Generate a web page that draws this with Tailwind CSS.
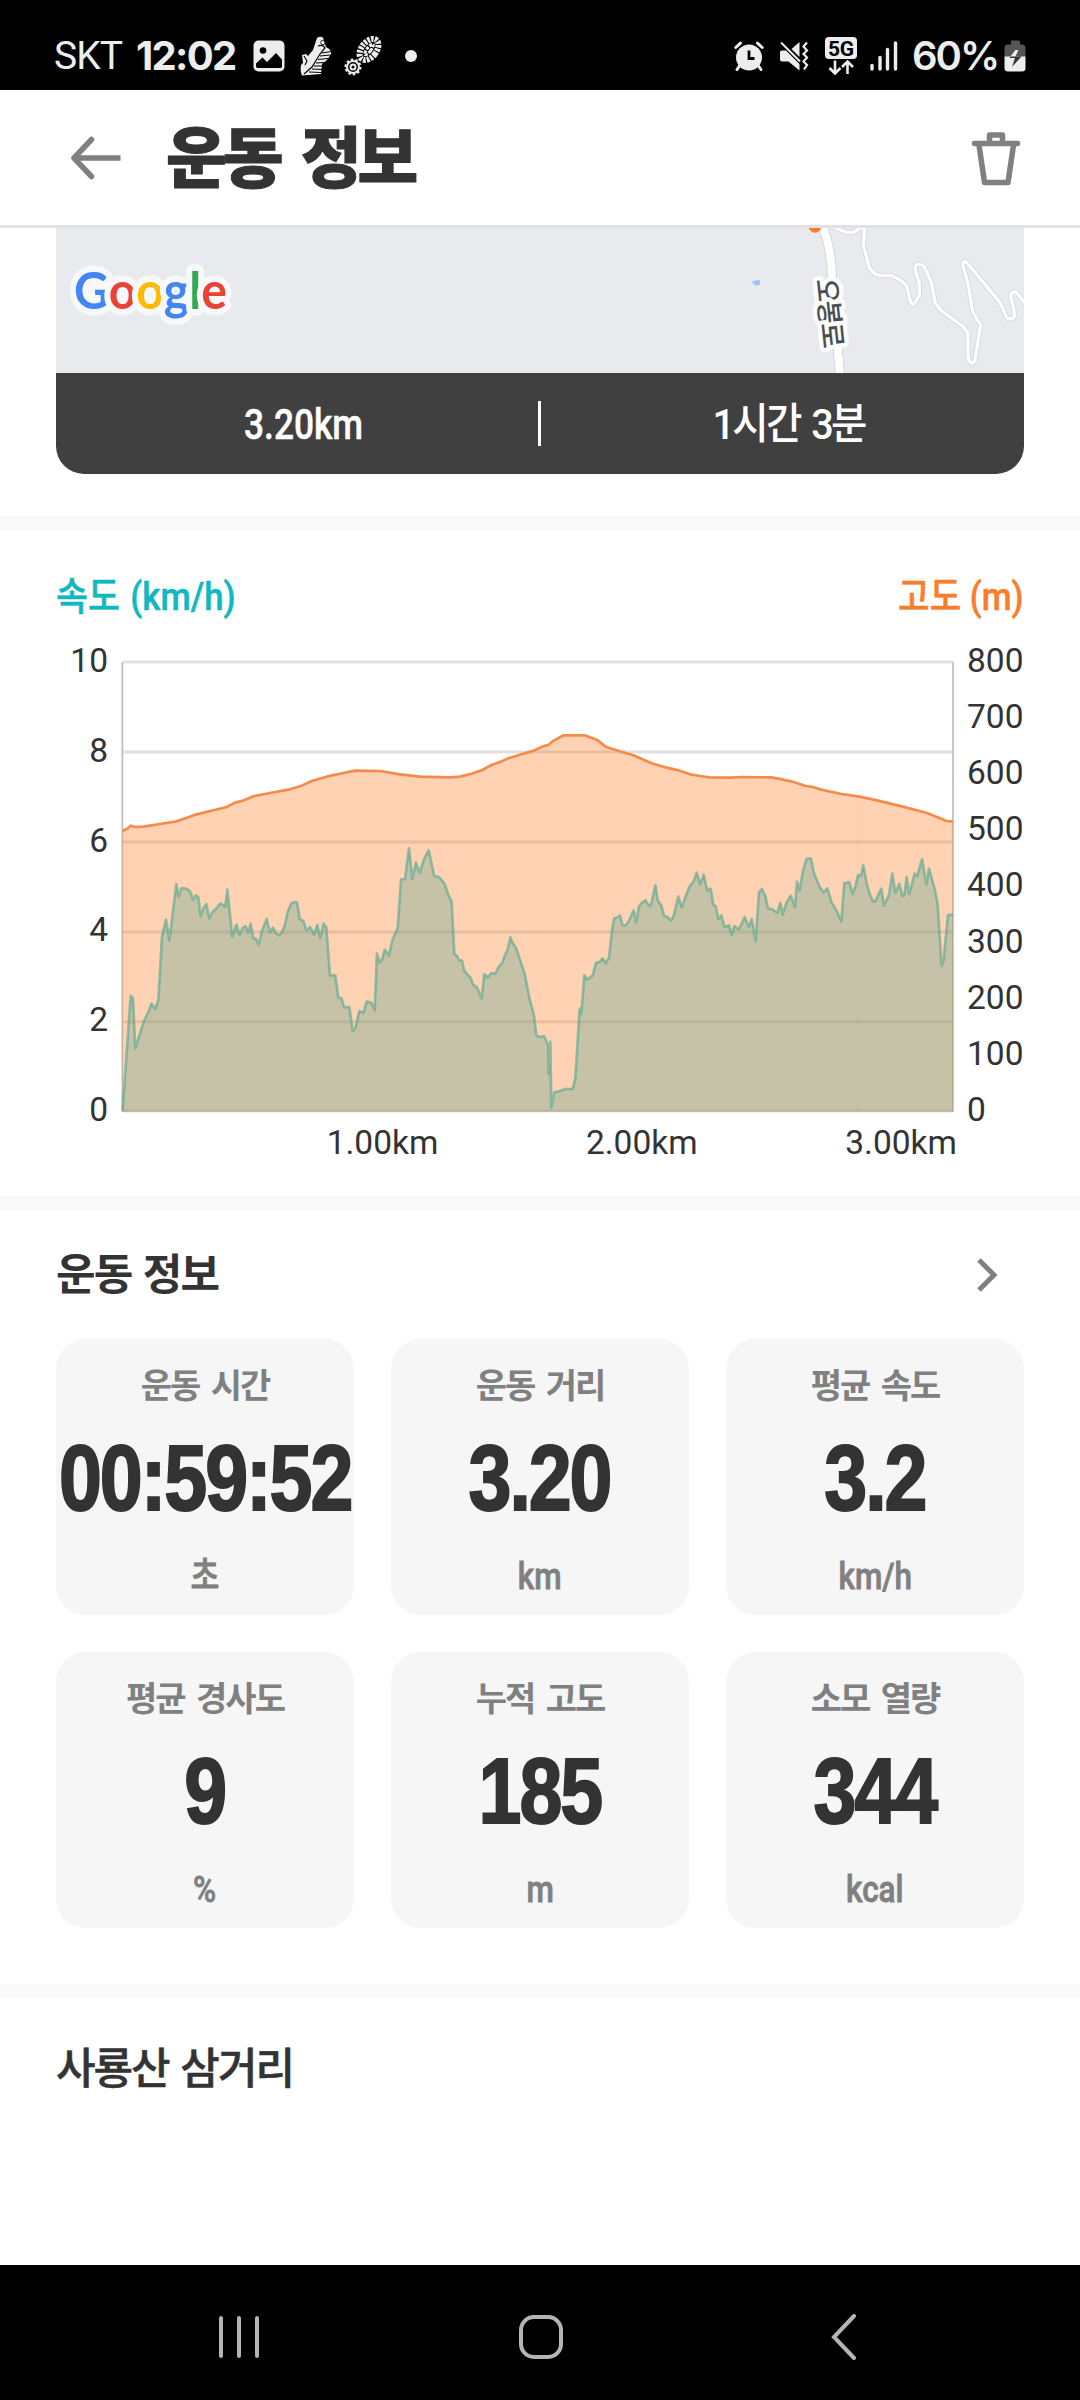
<!DOCTYPE html>
<html lang="ko">
<head>
  <meta charset="UTF-8">
  <title>운동 정보</title>
  <script src="https://cdn.jsdelivr.net/npm/@tailwindcss/browser@4"></script>
  <meta name="viewport" content="width=device-width, initial-scale=1.0">
</head>

<body class="bg-white">
  <div class="w-[1080px] h-[2400px] flex flex-col overflow-hidden bg-white text-[#333333] font-['Roboto','Noto_Sans_CJK_KR',sans-serif]">

    <!-- Status bar -->
    <div class="h-[90px] shrink-0 bg-black text-[#ededed] flex items-center justify-between pt-[22px] pl-[54px] pr-[54px]">
      <div class="flex items-center">
        <span class="w-[82px] text-[39px] leading-none tracking-[-1px]">SKT</span>
        <span class="w-[117px] text-[40px] leading-none font-bold font-['Inter',sans-serif] tracking-[-1.700px]">12:02</span>
        <svg class="w-[32px] h-[32px]" viewBox="0 0 32 32">
          <rect x="0.5" y="0.5" width="31" height="31" rx="5" fill="#ededed"/>
          <circle cx="10" cy="10.500" r="3.300" fill="#000"/>
          <path d="M3 23.500L9.500 17.500L14 22L23 13L29 19.500V26.500Q29 28 27 28H5Q3 28 3 26.500Z" fill="#000"/>
        </svg>
        <svg class="w-[32px] h-[40px] ml-[15px]" viewBox="0 0 32 40">
          <path d="M17 2Q20 0 23 1.500L26 11Q32 14 31 18L27 24L22 28L21 38L2 39.500Q0 35 1 29L3 27L2 19L6 18L8 20L13 14Z" fill="#ededed"/>
          <path d="M18 10Q23 8 25 12L20 18L12 31L4 38" fill="none" stroke="#000" stroke-width="1.200"/>
          <path d="M22 17L31 15.500M20 20L30 19M18 23.500L28 22.500M16 27L25 26.500M14 30L23 30M12 33L22 33.500M9 36L21 36.500M4 20L7 25L5 29" fill="none" stroke="#000" stroke-width="1.100"/>
          <circle cx="23" cy="6.500" r="2.300" fill="none" stroke="#000" stroke-width="0.800"/>
        </svg>
        <svg class="w-[38px] h-[40px] ml-[12px]" viewBox="0 0 38 40">
          <ellipse cx="25" cy="13.500" rx="7.500" ry="12" transform="rotate(38 25 13.500)" fill="none" stroke="#ededed" stroke-width="6" stroke-dasharray="2.600 1.100"/>
          <ellipse cx="25" cy="13.500" rx="2" ry="6.500" transform="rotate(38 25 13.500)" fill="none" stroke="#ededed" stroke-width="3" stroke-dasharray="3 1.200"/>
          <circle cx="9" cy="31" r="6" fill="none" stroke="#ededed" stroke-width="2"/>
          <circle cx="9" cy="31" r="7.500" fill="none" stroke="#ededed" stroke-width="2" stroke-dasharray="2.500 2.200"/>
          <circle cx="9" cy="31" r="2.500" fill="none" stroke="#ededed" stroke-width="2"/>
        </svg>
        <span class="w-[12px] h-[12px] rounded-full bg-[#ededed] ml-[23px]"></span>
      </div>

      <div class="flex items-center">
        <svg class="w-[30px] h-[30px]" viewBox="0 0 30 30">
          <circle cx="15" cy="16.500" r="13" fill="#ededed"/>
          <path d="M1.800 6.500L6.500 2.200M28.200 6.500L23.500 2.200M5.500 25L3 28.500M24.500 25L27 28.500" stroke="#ededed" stroke-width="3" stroke-linecap="round"/>
          <path d="M15 9.500V17.500H20.500" fill="none" stroke="#000" stroke-width="2.800"/>
        </svg>
        <svg class="w-[30px] h-[30px] ml-[15px]" viewBox="0 0 30 30">
          <path d="M1 11Q1 9.500 3 9.500H7L20.500 23V29.500L9.500 20.500H3Q1 20.500 1 18.500Z" fill="#ededed"/>
          <path d="M12.500 8L20.500 1V16Z" fill="#ededed"/>
          <path d="M2 1.500L21 20.500" stroke="#ededed" stroke-width="2"/>
          <path d="M28 1.500L24.500 5.500L28 9.500L24.500 13L28 16.500L24.500 20.500L28 24L25 28.500" fill="none" stroke="#ededed" stroke-width="2.200"/>
        </svg>
        <svg class="w-[34px] h-[38px] ml-[15px]" viewBox="0 0 34 38">
          <rect x="1" y="0" width="32" height="22" rx="4" fill="#ededed"/>
          <text x="17" y="18.500" text-anchor="middle" font-size="21" font-weight="700" textLength="26" fill="#000">5G</text>
          <path d="M11 23.500V36M5.500 31L11 36.500L16.500 31M23.500 37V24.500M18 30L23.500 24.500L29 30" fill="none" stroke="#ededed" stroke-width="2.600"/>
        </svg>
        <svg class="w-[28px] h-[30px] ml-[12px]" viewBox="0 0 28 30">
          <path d="M2 24.500V28M10 16.500V28M17.500 8.500V28M25.500 2V28" stroke="#ededed" stroke-width="3.400" stroke-linecap="round"/>
        </svg>
        <span class="w-[92px] ml-[14px] text-[40px] leading-none font-semibold font-['Inter',sans-serif] tracking-[-2px] whitespace-nowrap">60%</span>
        <svg class="w-[22px] h-[32px]" viewBox="0 0 22 32">
          <path d="M7 1.500Q7 0.500 8 0.500H15Q16 0.500 16 1.500V4.500H18Q21.500 4.500 21.500 8V17H0.500V8Q0.500 4.500 4 4.500H7Z" fill="#555"/>
          <path d="M0.500 16.500H21.500V28Q21.500 31.500 18 31.500H4Q0.500 31.500 0.500 28Z" fill="#ededed"/>
          <path d="M11.500 10L5.500 18H11L8 27L17.500 16.500H11.500L14.500 10Z" fill="#333"/>
          <path d="M11.500 10L6.300 16.500H11.500L14.500 10Z" fill="#ededed"/>
        </svg>
      </div>
    </div>

    <!-- Header -->
    <div class="h-[138px] shrink-0 border-b-[3px] border-[#e2e2e2] flex items-center pl-[70px] pr-[58px]">
      <svg class="w-[52px] h-[44px]" viewBox="0 0 52 44" fill="none" stroke="#808080" stroke-width="5.500" stroke-linecap="round" stroke-linejoin="round">
        <path d="M21.500 3.500L4 22L21.500 40.500"/>
        <path d="M4 22H50.500" stroke-linecap="butt"/>
      </svg>
      <h1 class="ml-[44px] pt-[5px] text-[66px] leading-none font-black tracking-[-4px] [word-spacing:9px] [-webkit-text-stroke:1px] grow">운동 정보</h1>
      <svg class="w-[52px] h-[56px]" viewBox="0 0 52 56" fill="none" stroke="#808080" stroke-width="5.500" stroke-linecap="round" stroke-linejoin="round">
        <path d="M4.500 13.500H47.500M19.500 13V5H32.500V13M9 15L14.500 52.500H38L43.500 15"/>
      </svg>
    </div>

    <!-- Map -->
    <div class="shrink-0 px-14">
      <svg class="block w-[968px] h-[145px] bg-[#e8eaee]" viewBox="0 0 968 145">
        <text x="18" y="80.500" font-size="52" font-family="Lato, sans-serif" font-weight="700" textLength="153" lengthAdjust="spacingAndGlyphs" stroke="#f6f8fa" stroke-width="13" stroke-linejoin="round" paint-order="stroke"><tspan fill="#4285f4">G</tspan><tspan fill="#ea4335">o</tspan><tspan fill="#fbbc05">o</tspan><tspan fill="#4285f4">g</tspan><tspan fill="#34a853">l</tspan><tspan fill="#ea4335">e</tspan></text>
        <g transform="translate(684 -3) scale(0.3333)" fill="none" stroke-linejoin="round">
          <path d="M36 169L48 166H60V178L52 182L40 178Z" fill="#a3c2f7"/>
          <g id="roads">
            <path d="M245 0C268 50 275 100 276 160L300 450" stroke="#d3d6da" stroke-width="30"/>
            <path d="M280 5L318 22H340L358 10L374 5L370 60L388 128L405 147L425 152H455L480 164L500 182L508 215C512 242 522 242 528 228L538 210V175L527 140C522 115 535 112 553 125L575 175L586 235L605 258L670 305L684 325V395C688 418 700 418 705 405L722 300L698 260L685 180L670 125C665 108 677 106 685 118L780 232L800 278Q812 286 822 276C828 260 812 225 812 212C816 198 828 198 834 208L860 240" stroke="#d3d6da" stroke-width="15"/>
            <path d="M245 0C268 50 275 100 276 160L300 450" stroke="#fff" stroke-width="24"/>
            <path d="M280 5L318 22H340L358 10L374 5L370 60L388 128L405 147L425 152H455L480 164L500 182L508 215C512 242 522 242 528 228L538 210V175L527 140C522 115 535 112 553 125L575 175L586 235L605 258L670 305L684 325V395C688 418 700 418 705 405L722 300L698 260L685 180L670 125C665 108 677 106 685 118L780 232L800 278Q812 286 822 276C828 260 812 225 812 212C816 198 828 198 834 208L860 240" stroke="#fff" stroke-width="10"/>
          </g>
          <circle cx="225" cy="4" r="19" fill="#ff7a22"/>
          <text transform="translate(270 265) rotate(84)" x="0" y="31" text-anchor="middle" font-size="84" font-weight="500" textLength="210" font-family="Noto Sans CJK KR, sans-serif" fill="#4a4d51" stroke="#fbfcfc" stroke-width="26" paint-order="stroke">오봉로</text>
        </g>
      </svg>
      <div class="h-[101px] bg-[#404040] rounded-b-[28px] text-white text-[43px] font-medium flex items-center">
        <div class="w-[482px] pl-[14px] pt-[2px] text-center"><span class="inline-block scale-x-[0.82] [-webkit-text-stroke:0.5px]">3.20km</span></div>
        <div class="w-[3px] h-[45px] bg-white"></div>
        <div class="w-[483px] pl-[12px] pt-[2px] text-center"><span class="inline-block tracking-[-3px] [word-spacing:5px] scale-x-[0.92]">1시간 3분</span></div>
      </div>
    </div>

    <div class="h-[14px] shrink-0 bg-[#fafafa] mt-[42px]"></div>

    <!-- Speed / altitude chart -->
    <div class="h-[666px] shrink-0 px-14 pt-[40px]">
      <div class="flex justify-between h-[54px] items-center text-[39px] font-medium leading-none [-webkit-text-stroke:0.5px]">
        <span class="text-[#12b8bf] inline-block origin-left scale-x-[0.89] [word-spacing:2px]">속도 (km/h)</span>
        <span class="text-[#f87e2b] inline-block origin-right scale-x-[0.88]">고도 (m)</span>
      </div>
      <svg class="block w-[968px] h-[530px] mt-[16px]" viewBox="0 0 968 530">
        <g transform="translate(66 20) scale(0.33333)">
          <path d="M2 6H2493M2 276H2493M2 546H2493M2 816H2493M2 1085H2493M2 1353H2493" stroke="#e0e0e0" stroke-width="9"/>
          <path d="M1 6V1355M2493 6V1355" stroke="#bdbdbd" stroke-width="5"/>
          <path id="alt-fill" fill="#ff7a22" fill-opacity="0.34"/>
          <path id="alt-line" fill="none" stroke="#f58b48" stroke-width="8" stroke-linejoin="round"/>
          <path id="speed-fill" fill="#5ca793" fill-opacity="0.35"/>
          <path id="speed-line" fill="none" stroke="#4fa88f" stroke-opacity="0.6" stroke-width="8" stroke-linejoin="round"/>
          <path d="M2209 410V1353" stroke="#000" stroke-opacity="0.02" stroke-width="4"/>
        </g>
        <g id="axis-labels" font-size="33.500" fill="#333333"></g>
      </svg>
    </div>

    <div class="h-[14px] shrink-0 bg-[#fafafa]"></div>

    <!-- Workout info -->
    <div class="h-[774px] shrink-0 px-14">
      <div class="flex items-center justify-between h-[129px] pr-[26px]">
        <h2 class="text-[43px] pt-[2px] leading-none font-bold tracking-[-1.700px] [word-spacing:2px]">운동 정보</h2>
        <svg class="w-[22px] h-[36px]" viewBox="0 0 22 36" fill="none" stroke="#808080" stroke-width="5">
          <path d="M3 3L18 18L3 33"/>
        </svg>
      </div>
      <div id="cards" class="grid grid-cols-3 gap-[37px]"></div>
    </div>

    <div class="h-[14px] shrink-0 bg-[#fafafa]"></div>

    <div class="grow px-14 pt-[50px]">
      <h2 class="text-[43px] leading-none font-medium tracking-[-2px] [word-spacing:3px] [-webkit-text-stroke:0.5px]">사룡산 삼거리</h2>
    </div>

    <!-- Navigation bar -->
    <div class="h-[135px] shrink-0 bg-black flex items-center pl-[219px] pt-[9px]">
      <svg class="w-[40px] h-[46px]" viewBox="0 0 40 46" stroke="#b4b4b4" stroke-width="4" stroke-linecap="round">
        <path d="M2 4V42M20 4V42M38 4V42"/>
      </svg>
      <svg class="w-[46px] h-[46px] ml-[259px]" viewBox="0 0 46 46" fill="none" stroke="#b4b4b4" stroke-width="4">
        <rect x="3" y="3" width="40" height="40" rx="13"/>
      </svg>
      <svg class="w-[27px] h-[46px] ml-[266px]" viewBox="0 0 27 46" fill="none" stroke="#b4b4b4" stroke-width="4" stroke-linecap="round">
        <path d="M24 2L4 23L24 44"/>
      </svg>
    </div>
  </div>

  <script>
    // plot area is 2493 x 1353 units
    const altitude = "1,513 16,506 26,497 39,501 64,500 114,492 159,485 184,477 224,463 314,441 339,428 366,421 394,409 444,399 499,389 539,377 569,363 614,350 664,339 699,332 774,333 834,343 894,350 984,352 1014,350 1046,342 1081,330 1106,316 1134,306 1164,293 1234,272 1266,258 1281,254 1291,244 1324,226 1387,226 1424,239 1451,260 1479,269 1534,286 1589,310 1634,323 1669,331 1704,343 1734,348 1762,352 1826,353 1858,351 1949,352 2008,364 2051,378 2073,381 2094,388 2158,402 2212,410 2265,421 2351,442 2415,459 2474,483 2493,485";
    const speed = "2,1352 26,1007 33,1015 40,1165 64,1088 81,1052 88,1031 100,1047 109,1020 120,830 132,779 142,842 163,672 170,710 178,685 193,686 204,694 213,719 222,706 229,712 236,768 244,745 253,732 262,775 272,755 283,746 295,730 310,740 316,689 331,830 343,794 353,825 362,804 371,798 379,818 386,791 394,835 402,836 410,855 420,812 434,777 444,817 453,803 462,821 472,826 479,818 488,797 497,756 507,731 516,726 525,727 533,777 544,783 554,811 564,801 576,824 586,795 595,834 605,791 613,802 624,946 640,946 649,1014 658,1014 667,1042 682,1041 692,1112 700,1105 712,1053 725,1058 734,1025 748,1028 758,1051 765,881 773,908 781,897 788,869 801,886 811,840 827,805 837,658 849,657 861,565 871,657 882,608 893,639 906,598 920,571 937,648 952,652 968,672 981,710 989,724 997,882 1005,888 1011,900 1020,902 1027,933 1046,954 1054,975 1065,982 1079,1015 1087,942 1097,952 1108,939 1119,942 1130,921 1142,906 1149,885 1157,870 1165,832 1172,849 1182,863 1208,942 1224,1022 1236,1067 1243,1126 1254,1131 1266,1128 1279,1157 1280,1242 1285,1145 1288,1342 1297,1297 1314,1293 1330,1287 1352,1287 1360,1255 1373,1046 1378,1062 1387,946 1396,959 1412,947 1422,908 1432,906 1442,895 1451,910 1461,893 1471,804 1477,775 1487,772 1494,766 1501,795 1510,797 1518,788 1535,752 1543,787 1550,742 1558,730 1570,721 1582,738 1588,732 1600,675 1607,720 1618,737 1626,767 1636,770 1646,782 1655,768 1669,710 1679,742 1702,680 1714,665 1724,638 1735,673 1745,644 1756,693 1766,686 1774,735 1781,738 1789,777 1798,766 1808,802 1821,796 1829,825 1837,798 1851,808 1868,771 1880,801 1889,777 1901,843 1911,697 1920,687 1930,708 1938,745 1951,748 1966,758 1975,729 1982,764 1993,729 2006,707 2019,741 2025,665 2033,691 2043,632 2054,596 2067,596 2076,640 2093,681 2105,697 2116,685 2129,728 2144,752 2158,784 2167,669 2182,667 2192,702 2201,676 2208,645 2217,647 2224,616 2234,670 2243,702 2253,724 2260,724 2278,686 2286,737 2301,705 2311,641 2320,699 2332,671 2341,708 2347,706 2354,651 2362,702 2378,641 2386,648 2400,597 2413,673 2421,626 2439,690 2447,735 2459,918 2465,900 2478,765 2493,764";

    function drawSeries(name, points) {
      document.getElementById(name + "-line").setAttribute("d", "M" + points);
      document.getElementById(name + "-fill").setAttribute("d", "M" + points + " 2493,1355 1,1355Z");
    }
    drawSeries("alt", altitude);
    drawSeries("speed", speed);

    let labels = "";
    [10, 8, 6, 4, 2, 0].forEach((v, i) => {
      labels += `<text x="52" y="${32 + i * 89.8}" text-anchor="end">${v}</text>`;
    });
    [800, 700, 600, 500, 400, 300, 200, 100, 0].forEach((v, i) => {
      labels += `<text x="911" y="${32 + i * 56.1}">${v}</text>`;
    });
    ["1.00km", "2.00km", "3.00km"].forEach((v, i) => {
      labels += `<text x="${326.5 + i * 259.3}" y="514" text-anchor="middle">${v}</text>`;
    });
    document.getElementById("axis-labels").innerHTML = labels;

    const stats = [
      { label: "운동 시간", value: "00:59:52", unit: "초" },
      { label: "운동 거리", value: "3.20", unit: "km" },
      { label: "평균 속도", value: "3.2", unit: "km/h" },
      { label: "평균 경사도", value: "9", unit: "%" },
      { label: "누적 고도", value: "185", unit: "m" },
      { label: "소모 열량", value: "344", unit: "kcal" },
    ];
    document.getElementById("cards").innerHTML = stats.map(s => `
      <div class="h-[276px] bg-[#f6f6f6] rounded-[30px] flex flex-col items-center pt-[29px] whitespace-nowrap">
        <div class="h-[36px] text-[34px] leading-[36px] font-bold tracking-[-2px] [word-spacing:5px] text-[#808080]">${s.label}</div>
        <div class="h-[94px] mt-[27px] text-[93px] leading-[94px] font-bold tracking-[-2.500px] [-webkit-text-stroke:2px] font-['Liberation_Sans',sans-serif]"><span class="inline-block scale-x-[0.83]">${s.value}</span></div>
        <div class="h-[38px] mt-[33px] text-[37px] leading-[38px] font-medium text-[#808080] [-webkit-text-stroke:0.8px]"><span class="inline-block scale-x-[0.85]">${s.unit}</span></div>
      </div>
    `).join("");
  </script>
</body>
</html>
